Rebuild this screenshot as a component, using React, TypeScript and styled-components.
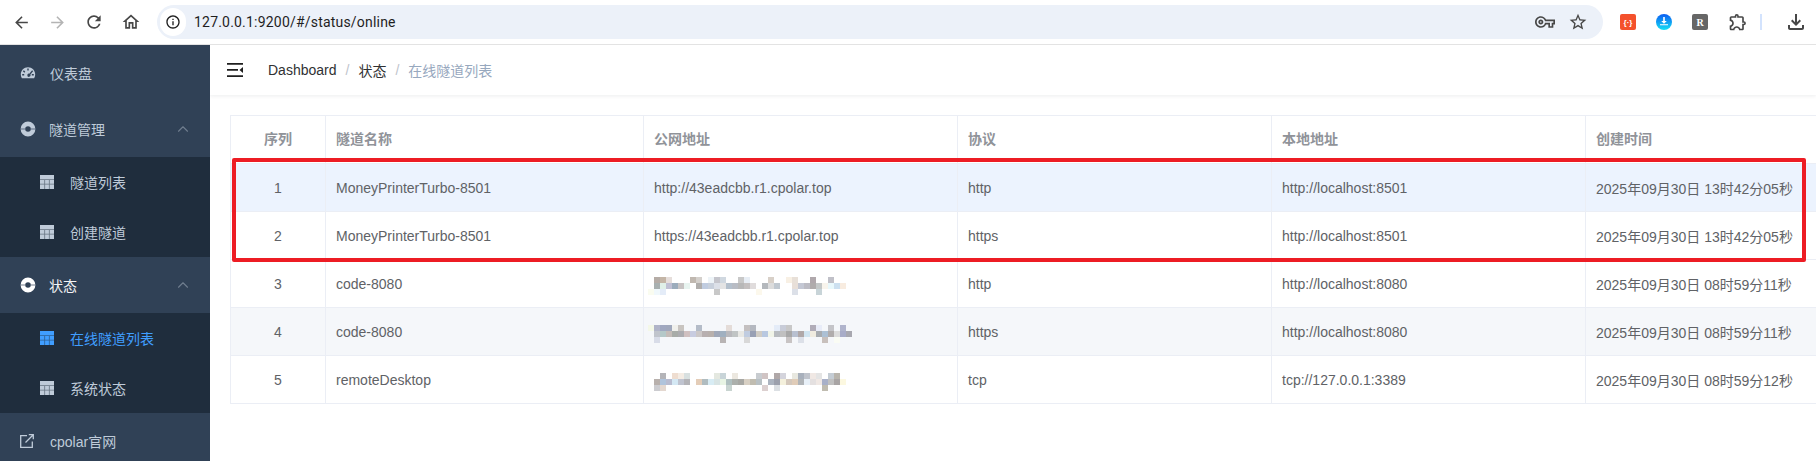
import React from 'react';
import styled, {createGlobalStyle} from 'styled-components';
import {ChevronUp} from 'lucide-react';
import {
  MdArrowBack,
  MdArrowForward,
  MdInfoOutline,
  MdOutlineExtension,
  MdOutlineFileDownload,
  MdOutlineHome,
  MdOutlineVpnKey,
  MdRefresh,
  MdStarBorder,
} from 'react-icons/md';

const GlobalStyle = createGlobalStyle`
  html, body {
    margin: 0;
    height: 100%;
    overflow: hidden;
    background: #fff;
    font-family: "Liberation Sans", "Noto Sans CJK SC", sans-serif;
  }
  * { box-sizing: border-box; }
`;

// mosaic cells: one string per row, "col:color" pairs, 6px cells
type Mosaic = string[];

const mosaicA: Mosaic = [
  '1:b5aca6 2:c4b5a6 3:e6dedb 7:c0b8b0 8:d4d0cc 10:eef4f8 11:c5c5cc 12:d0d8e0 15:c8c8c8 16:e8eef5 20:d8d0c8 23:f8f0e4 24:e8e0d8 27:b0a8ac 30:c0c0c8',
  '1:a8b0b0 2:e0f0e8 3:c0c0d4 4:9cacbc 5:c8c4c4 6:e8f4f0 8:b0aeac 9:c0cce0 10:c8d0dc 11:dce0e8 12:e4e4e4 13:b4c0cc 14:b8bcc4 15:b8b8b8 16:c4c0c0 17:e0dcdc 19:b4b8bc 20:dcdcdc 21:c0c8d0 24:e8dfd8 25:c4c8d4 26:bcbcc4 27:b0acac 28:c4c8c8 29:f8f4ec 30:e8f8fc 31:cce0f0 32:f8ece0',
  '0:fafcf0 1:f0f8fc 2:e4ecf8 11:c8c8c8 18:fcf8ec 24:dce0e8 28:c8d4d8',
];

const mosaicB: Mosaic = [
  '0:f4f8e8 1:b0b4c8 2:a0a8c0 3:a0a8bc 4:f0f0ec 5:c8c4c0 8:b4bcc8 13:e4dcd8 16:c4c0c0 17:b4b8c0 21:e4ecf8 22:c8ccd8 23:c8c8c8 27:b0acb8 28:e8ecf8 30:c4c4c8 32:b0b4cc',
  '1:c0c4cc 2:b4c8c8 3:c4bcb8 4:a8aca8 5:acacb0 6:d0c0c0 7:c8cce0 8:ccc8c8 9:b8b0b0 10:b8b0ac 11:a0a8b8 12:a0b0c0 13:b8b8bc 14:c0c4c4 15:e8e8e4 16:c0cce0 17:98a0b4 18:d0ccc4 19:b8c8e0 20:f0f4e8 21:b8bcc0 22:c0c0c0 23:a8a8a8 24:b8c0d0 25:b0a8a8 26:d0e4f0 27:f0ece0 28:a8acb0 29:acc0d4 30:b0acac 31:dcdcdc 32:a8acc8 33:a8a8b0',
  '1:d8dce8 12:b8b4b4 16:d8d8d8 23:c8c4c4 25:dce0e8 29:c8c0bc 31:fafcf4',
];

const mosaicC: Mosaic = [
  '2:b4b4b8 4:eeddd0 5:f4ece4 6:d8e0e0 11:e4e8e0 12:c8d4d8 14:ece8e0 18:c8ccd0 19:d0c4c4 21:b0a8a8 22:d4d4dc 24:e8e8e0 25:a8b0bc 26:c0c4cc 27:f0e8e4 28:e4e4e4 30:c4ccd4 31:b8b4ac',
  '1:b8b0ac 2:b0c4dc 3:b8bcd0 4:d4e8f4 5:c0c4d0 6:b4b4b8 8:e4cdb8 9:b0bcc0 10:d8ecf4 11:d8e4e4 12:e8f4e4 13:b0c0c0 14:acb0ac 15:a8a8a4 16:d8d0c4 17:c0bcb0 18:b8c0c4 20:acb4c0 21:9ca0ac 22:f4f0dc 23:d4c8bc 24:e0ccb8 25:b0b4b8 26:e8f0f8 27:e4e0e0 28:f0e8e4 29:a8b0c8 30:c0c0c0 31:a8a4a4 32:fcf8e0',
  '1:ccccd0 2:e4d8d0 13:c8d4d0 19:dcd0d0 21:dce0e4 29:c0bcb0',
];

const MosaicSvg = styled.svg`
  display: block;
  margin: 4px 0 0 -6px;
`;

const Pixelated: React.FC<{rows: Mosaic}> = ({rows}) => (
  <MosaicSvg width={210} height={18} shapeRendering="crispEdges">
    {rows.map((row, y) =>
      row.split(' ').map((cell) => {
        const [col, color] = cell.split(':');
        return <rect key={`${y}-${col}`} x={Number(col) * 6} y={y * 6} width={6} height={6} fill={`#${color}`} />;
      }),
    )}
  </MosaicSvg>
);

const GaugeIcon = () => (
  <svg width="16" height="16" viewBox="0 0 16 16">
    <path fill="currentColor" fillRule="evenodd" d="M8 2.2C3.9 2.2 .8 5.4.8 9.4c0 1.5.4 2.8 1.1 3.9h12.2c.7-1.1 1.1-2.4 1.1-3.9 0-4-3.1-7.2-7.2-7.2zM7.3 3.6h1.4v2H7.3zM3.9 5.3l1.4 1.4-1 1-1.4-1.4zm8.2 0 1 1-2.7 3.3a1.6 1.6 0 1 1-1.1-.9zM2.2 9h2v1.4h-2zm9.6 0h2v1.4h-2z" />
  </svg>
);

const BuoyIcon = () => (
  <svg width="16" height="16" viewBox="0 0 16 16">
    <path fill="currentColor" fillRule="evenodd" d="M8 .6a7.4 7.4 0 1 0 0 14.8A7.4 7.4 0 0 0 8 .6zm0 4.6a2.8 2.8 0 1 1 0 5.600 2.8 2.8 0 0 1 0-5.600z" />
    <path fill="#304156" opacity=".45" d="M.6 7.2h4.600v1.600H.6zM10.800 7.2h4.600v1.600h-4.600z" />
  </svg>
);

const GridIcon = () => (
  <svg width="14" height="14" viewBox="0 0 14 14">
    <path fill="currentColor" d="M0 0h14v14H0z" />
    <path fill="#1f2d3d" opacity=".55" d="M0 4.200h14v.8H0zM0 8.800h14v.8H0zM4.300 4.200h.8V14h-.8zM8.900 4.200h.8V14h-.8z" />
  </svg>
);

const LinkOutIcon = () => (
  <svg width="14" height="14" viewBox="0 0 14 14" fill="none" stroke="currentColor" strokeWidth="1.300">
    <path d="M7 1.700H.7v11.600h11.600V7.500" />
    <path d="M5.500 8.500 13 1M8.800.700h4.500v4.500" />
  </svg>
);

const CollapseIcon = () => (
  <svg width="16" height="14" viewBox="0 0 16 14">
    <path fill="#1f1f1f" d="M0 0h16v1.800H0zM0 6h11v1.800H0zM0 12.200h16V14H0zM16 4v6l-3.500-3z" />
  </svg>
);

const DownloaderIcon = () => (
  <svg width="16" height="16" viewBox="0 0 16 16">
    <defs>
      <linearGradient id="dl" x1="0" y1="0" x2="0" y2="1">
        <stop offset="0" stopColor="#0b5cf2" />
        <stop offset="1" stopColor="#14e0f5" />
      </linearGradient>
    </defs>
    <circle cx="8" cy="8" r="8" fill="url(#dl)" />
    <path fill="#fff" d="M7.200 3h1.600v4h2L8 9.800 5.200 7h2zM4 10.300h8v1H4z" />
  </svg>
);

const ToolBar = styled.header`
  display: flex;
  align-items: center;
  height: 45px;
  padding-left: 12px;
  border-bottom: 1px solid #e3e3e3;
  background: #fff;
  color: #474747;
`;

const NavGroup = styled.div`
  display: flex;
  align-items: center;
  gap: 17px;
  width: 145px;
`;

const ToolIcon = styled.span<{$muted?: boolean}>`
  display: flex;
  color: ${(p) => (p.$muted ? '#b4b4b4' : '#474747')};
`;

const AddressBar = styled.div`
  display: flex;
  align-items: center;
  width: 1446px;
  height: 34px;
  padding: 0 15px 0 3px;
  border-radius: 17px;
  background: #ecf1f9;
`;

const SiteInfo = styled.span`
  display: flex;
  align-items: center;
  justify-content: center;
  width: 26px;
  height: 28px;
  margin-right: 8px;
  border-radius: 14px;
  background: #fff;
  color: #1f1f1f;
`;

const Url = styled.span`
  flex: 1;
  color: #1f1f1f;
  font: 14px Roboto, "Liberation Sans", sans-serif;
  letter-spacing: 0.2px;
`;

const AddressActions = styled.div`
  display: flex;
  align-items: center;
  gap: 13px;
`;

const Extensions = styled.div`
  display: flex;
  align-items: center;
  gap: 20px;
  margin-left: 17px;
`;

const ExtTile = styled.span<{$bg: string}>`
  display: flex;
  align-items: center;
  justify-content: center;
  width: 16px;
  height: 16px;
  border-radius: 2px;
  background: ${(p) => p.$bg};
  color: #fff;
  font-size: 8px;
  font-weight: 700;
`;

const RTile = styled(ExtTile)`
  font: 700 10px "Liberation Serif", serif;
`;

const ToolDivider = styled.span`
  width: 2px;
  height: 16px;
  margin: 0 2px 0 -8px;
  background: #d3e3fd;
`;

const Body = styled.div`
  display: flex;
  height: calc(100vh - 45px);
`;

const Sidebar = styled.aside`
  flex: none;
  width: 210px;
  background: #304156;
  color: #bfcbd9;
  font-size: 14px;
`;

const MenuRow = styled.div<{$open?: boolean; $gap?: number}>`
  display: flex;
  align-items: center;
  height: 56px;
  padding: 0 20px;
  gap: ${(p) => p.$gap ?? 13}px;
  color: ${(p) => (p.$open ? '#f4f4f5' : '#bfcbd9')};
`;

const MenuIcon = styled.span<{$tint?: string}>`
  display: flex;
  color: ${(p) => p.$tint ?? '#bfcbd9'};
`;

const Arrow = styled(ChevronUp)`
  margin-left: auto;
  margin-right: -2px;
  color: #6f7d8e;
`;

const SubMenu = styled.div`
  background: #1f2d3d;
`;

const SubRow = styled.div<{$active?: boolean}>`
  display: flex;
  align-items: center;
  gap: 16px;
  height: 50px;
  padding-left: 40px;
  color: ${(p) => (p.$active ? '#409eff' : '#bfcbd9')};
`;

const Main = styled.main`
  flex: 1;
  min-width: 0;
  overflow: hidden;
`;

const NavBar = styled.div`
  display: flex;
  align-items: center;
  height: 50px;
  padding-left: 17px;
  background: #fff;
  box-shadow: 0 1px 4px rgba(0, 21, 41, 0.08);
`;

const Crumbs = styled.nav`
  display: flex;
  align-items: center;
  margin-left: 25px;
  font-size: 14px;
  color: #303133;
`;

const CrumbSeparator = styled.span`
  margin: 0 9px;
  color: #c0c4cc;
`;

const CurrentCrumb = styled.span`
  color: #97a8be;
`;

const Content = styled.section`
  padding: 20px 0 0 20px;
`;

const TableWrap = styled.div`
  position: relative;
  width: 1656px;
  border-top: 1px solid #ebeef5;
  border-left: 1px solid #ebeef5;
`;

const Table = styled.table`
  width: 1655px;
  table-layout: fixed;
  border-collapse: separate;
  border-spacing: 0;
  font-size: 14px;
  color: #606266;
`;

const HeadCell = styled.th<{$center?: boolean}>`
  height: 48px;
  padding: 0 10px 4px;
  border-right: 1px solid #ebeef5;
  border-bottom: 1px solid #ebeef5;
  color: #909399;
  font-weight: 700;
  text-align: ${(p) => (p.$center ? 'center' : 'left')};
`;

const Row = styled.tr<{$tone?: 'current' | 'stripe'}>`
  background: ${(p) => (p.$tone === 'current' ? '#ecf3fe' : p.$tone === 'stripe' ? '#f5f7fa' : '#fff')};
`;

const Cell = styled.td<{$center?: boolean}>`
  height: 48px;
  padding: 0 10px;
  border-right: 1px solid #ebeef5;
  border-bottom: 1px solid #ebeef5;
  text-align: ${(p) => (p.$center ? 'center' : 'left')};
  white-space: nowrap;
`;

const RedMark = styled.div`
  position: absolute;
  left: 1px;
  top: 42px;
  width: 1574px;
  height: 104px;
  border: 4px solid #ed1c24;
  border-radius: 2px;
  pointer-events: none;
`;

const columns = [95, 318, 314, 314, 314, 300];
const headers = ['序列', '隧道名称', '公网地址', '协议', '本地地址', '创建时间'];

type Tunnel = {
  name: string;
  address: string | Mosaic;
  protocol: string;
  local: string;
  created: string;
  tone?: 'current' | 'stripe';
};

const tunnels: Tunnel[] = [
  {name: 'MoneyPrinterTurbo-8501', address: 'http://43eadcbb.r1.cpolar.top', protocol: 'http', local: 'http://localhost:8501', created: '2025年09月30日 13时42分05秒', tone: 'current'},
  {name: 'MoneyPrinterTurbo-8501', address: 'https://43eadcbb.r1.cpolar.top', protocol: 'https', local: 'http://localhost:8501', created: '2025年09月30日 13时42分05秒'},
  {name: 'code-8080', address: mosaicA, protocol: 'http', local: 'http://localhost:8080', created: '2025年09月30日 08时59分11秒'},
  {name: 'code-8080', address: mosaicB, protocol: 'https', local: 'http://localhost:8080', created: '2025年09月30日 08时59分11秒', tone: 'stripe'},
  {name: 'remoteDesktop', address: mosaicC, protocol: 'tcp', local: 'tcp://127.0.0.1:3389', created: '2025年09月30日 08时59分12秒'},
];

const App: React.FC = () => {
  return (
    <>
      <GlobalStyle />
      <ToolBar>
        <NavGroup>
          <ToolIcon><MdArrowBack size={19} /></ToolIcon>
          <ToolIcon $muted><MdArrowForward size={19} /></ToolIcon>
          <ToolIcon><MdRefresh size={20} /></ToolIcon>
          <ToolIcon><MdOutlineHome size={20} /></ToolIcon>
        </NavGroup>
        <AddressBar>
          <SiteInfo><MdInfoOutline size={16} /></SiteInfo>
          <Url>127.0.0.1:9200/#/status/online</Url>
          <AddressActions>
            <ToolIcon><MdOutlineVpnKey size={20} /></ToolIcon>
            <ToolIcon><MdStarBorder size={20} /></ToolIcon>
          </AddressActions>
        </AddressBar>
        <Extensions>
          <ExtTile $bg="#f4512c">{'{·}'}</ExtTile>
          <DownloaderIcon />
          <RTile $bg="#666">R</RTile>
          <ToolIcon><MdOutlineExtension size={20} /></ToolIcon>
          <ToolDivider />
          <ToolIcon><MdOutlineFileDownload size={24} /></ToolIcon>
        </Extensions>
      </ToolBar>
      <Body>
        <Sidebar>
          <MenuRow $gap={14}>
            <MenuIcon><GaugeIcon /></MenuIcon>
            <span>仪表盘</span>
          </MenuRow>
          <MenuRow>
            <MenuIcon><BuoyIcon /></MenuIcon>
            <span>隧道管理</span>
            <Arrow size={18} strokeWidth={1.5} />
          </MenuRow>
          <SubMenu>
            <SubRow><MenuIcon><GridIcon /></MenuIcon><span>隧道列表</span></SubRow>
            <SubRow><MenuIcon><GridIcon /></MenuIcon><span>创建隧道</span></SubRow>
          </SubMenu>
          <MenuRow $open>
            <MenuIcon $tint="#fff"><BuoyIcon /></MenuIcon>
            <span>状态</span>
            <Arrow size={18} strokeWidth={1.5} />
          </MenuRow>
          <SubMenu>
            <SubRow $active><MenuIcon $tint="#409eff"><GridIcon /></MenuIcon><span>在线隧道列表</span></SubRow>
            <SubRow><MenuIcon><GridIcon /></MenuIcon><span>系统状态</span></SubRow>
          </SubMenu>
          <MenuRow $gap={16}>
            <MenuIcon><LinkOutIcon /></MenuIcon>
            <span>cpolar官网</span>
          </MenuRow>
        </Sidebar>
        <Main>
          <NavBar>
            <CollapseIcon />
            <Crumbs>
              <span>Dashboard</span>
              <CrumbSeparator>/</CrumbSeparator>
              <span>状态</span>
              <CrumbSeparator>/</CrumbSeparator>
              <CurrentCrumb>在线隧道列表</CurrentCrumb>
            </Crumbs>
          </NavBar>
          <Content>
            <TableWrap>
              <Table>
                <colgroup>
                  {columns.map((w, i) => (
                    <col key={i} width={w} />
                  ))}
                </colgroup>
                <thead>
                  <tr>
                    {headers.map((h, i) => (
                      <HeadCell key={h} $center={i === 0}>{h}</HeadCell>
                    ))}
                  </tr>
                </thead>
                <tbody>
                  {tunnels.map((t, i) => (
                    <Row key={i} $tone={t.tone}>
                      <Cell $center>{i + 1}</Cell>
                      <Cell>{t.name}</Cell>
                      <Cell>{typeof t.address === 'string' ? t.address : <Pixelated rows={t.address} />}</Cell>
                      <Cell>{t.protocol}</Cell>
                      <Cell>{t.local}</Cell>
                      <Cell>{t.created}</Cell>
                    </Row>
                  ))}
                </tbody>
              </Table>
              <RedMark />
            </TableWrap>
          </Content>
        </Main>
      </Body>
    </>
  );
};

export default App;
